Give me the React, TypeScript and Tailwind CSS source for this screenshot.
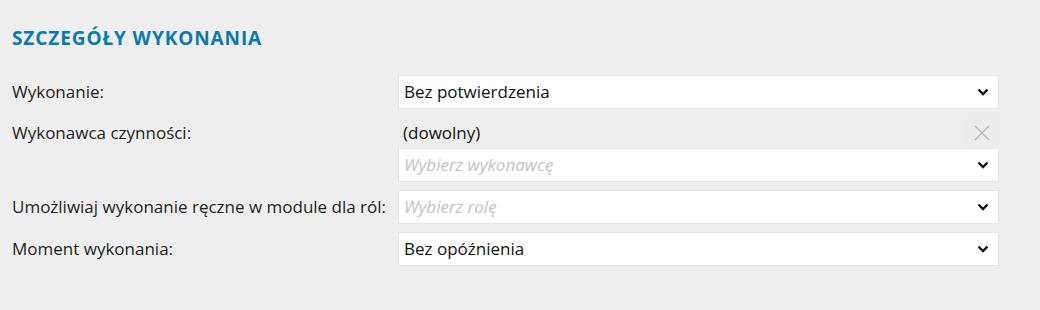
const font = { fontFamily: '"Open Sans", "Noto Sans", sans-serif' }

function Chevron() {
  return (
    <svg width="12" height="8" viewBox="0 0 12 8" className="shrink-0">
      <path d="M1.5 1.5 L6 6 L10.5 1.5" fill="none" stroke="#111" strokeWidth="2.4" />
    </svg>
  )
}

function Select({ value, placeholder }: { value?: string; placeholder?: string }) {
  return (
    <div className="flex h-[34px] items-center justify-between border border-[#e4e4e4] bg-white pl-[5px] pr-[9px]">
      {value ? (
        <span className="text-[#111]">{value}</span>
      ) : (
        <span className="italic text-[#c2c2c2]">{placeholder}</span>
      )}
      <Chevron />
    </div>
  )
}

export default function App() {
  return (
    <div className="h-[310px] w-[1040px] bg-[#eeeeee] pl-3 pr-[41px] pt-[26px]" style={font}>
      <div className="mb-[25px] text-[19px] font-bold leading-6 tracking-[0.9px] text-[#0b7aa8]">
        SZCZEGÓŁY WYKONANIA
      </div>
      <div className="grid grid-cols-[386px_1fr] items-center gap-y-2 text-[17px] text-[#1e1e1e]">
        <div>Wykonanie:</div>
        <Select value="Bez potwierdzenia" />

        <div className="row-span-2 self-start leading-[31px]">Wykonawca czynności:</div>
        <div className="-mb-2 flex h-[31px] items-center justify-between pl-[5px]">
          <span className="text-[#111]">(dowolny)</span>
          <div className="flex h-[32px] w-[34px] items-center justify-center bg-[#ededed]">
            <svg width="16" height="16" viewBox="0 0 16 16">
              <path d="M1 1 L15 15 M15 1 L1 15" stroke="#b4b4b4" strokeWidth="1.3" fill="none" />
            </svg>
          </div>
        </div>
        <Select placeholder="Wybierz wykonawcę" />

        <div>Umożliwiaj wykonanie ręczne w module dla ról:</div>
        <Select placeholder="Wybierz rolę" />

        <div>Moment wykonania:</div>
        <Select value="Bez opóźnienia" />
      </div>
    </div>
  )
}
